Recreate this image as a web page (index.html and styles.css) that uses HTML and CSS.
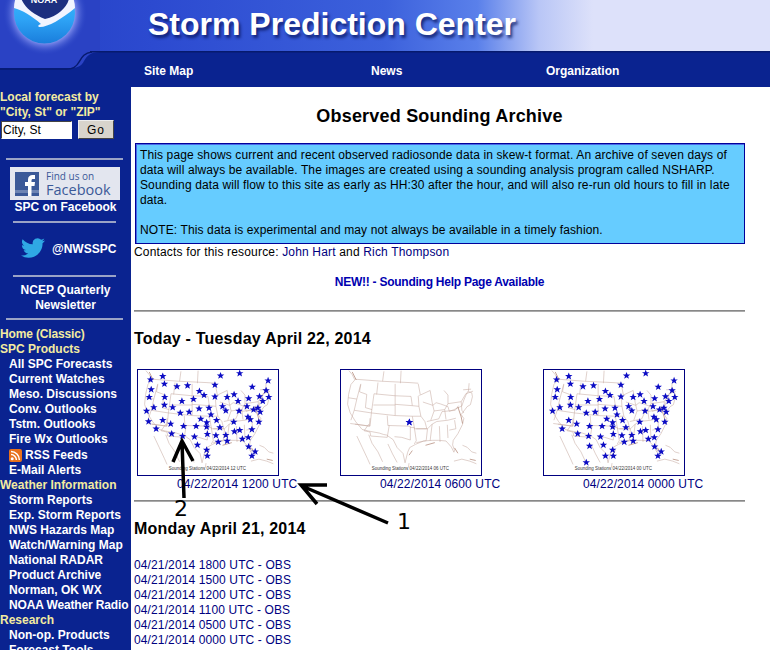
FILE: index.html
```html
<!DOCTYPE html>
<html lang="en">
<head>
<meta charset="utf-8">
<title>Observed Sounding Archive</title>
<link rel="stylesheet" href="styles.css">
</head>
<body>
<svg class="defs" width="0" height="0" aria-hidden="true">
  <defs>
    <marker id="star" markerUnits="userSpaceOnUse" viewBox="0 0 24 24" markerWidth="30" markerHeight="30" refX="12" refY="12" overflow="visible">
      <path d="M12 3l2.500 6.200h6.500l-5.200 4.100 2 6.500-5.800-3.900-5.800 3.900 2-6.500-5.200-4.100h6.500z" fill="#0c0cc4"/>
    </marker>
    <linearGradient id="sky" x1="0" x2="1" y1="0" y2="0">
      <stop offset="0" stop-color="#2440c4"/>
      <stop offset=".2" stop-color="#2c4ad0"/>
      <stop offset=".5" stop-color="#3c61dc"/>
      <stop offset=".62" stop-color="#5a80ea"/>
      <stop offset=".7" stop-color="#b9c6f6"/>
      <stop offset=".77" stop-color="#dde1fa"/>
      <stop offset="1" stop-color="#dde1fa"/>
    </linearGradient>
    <radialGradient id="glow" cx=".5" cy=".5" r=".5">
      <stop offset=".6" stop-color="#dfe4ff"/>
      <stop offset=".75" stop-color="#7c8cec" stop-opacity=".8"/>
      <stop offset="1" stop-color="#2c49c8" stop-opacity="0"/>
    </radialGradient>
    <linearGradient id="sea" x1="0" x2="0" y1="0" y2="1">
      <stop offset="0" stop-color="#3cc0ff"/>
      <stop offset=".6" stop-color="#2ea4f6"/>
      <stop offset="1" stop-color="#1a7edc"/>
    </linearGradient>
    <symbol id="usmap" viewBox="8 8 424 318">
      <g fill="none" stroke="#c4a89e" stroke-width="1.600">
        <path d="M32 10l10 12 8 16-12 14-7 30-3 30 8 26 16 26 20 24 20 5 32 6 12 4 10 2 20 14 12 24 18 18 6 28 8-32 6-14 18-10 24-10 26-2 20 0 22 2 16 18 8 16 2-6-6-16 2-14 14-20 14-28 4-18-8-12 18-24 10-6 6-24-2-12-12-4-6 12-6 14-6 18-26 12-12 4-4-14-22-8-14-4-10 8-30-10"/>
        <path d="M52 36l78 6 84 4 28 2"/>
        <path d="M30 92l26 4 -8 34 -10 30M56 96l12-46M68 52l-4 22 22 8-4 40M48 130l52 8-4 40-60-8M100 138l8-58M82 122l20 6M108 80l64 6 0 28-66 0M172 50v36l48 2 4 28-52-4M172 114l0 32-72-8M172 146l52 2 6 34-12 0-4-4-64-2-2-30M224 116l20 2 6 30-26 0M120 46l-4 36M138 12l-4 30M190 10l-2 38M242 50l6 32-6 6 2 30M250 148l12 16 6 22-38 0 0-4M218 178l0 42-26-8-22-2M154 176l-6 36-24-2-26-2-2-12-18-4 14-20M96 154l-2 24-44-6M230 182l6 40-6 10M236 186l34 0 14-14 14-8 34-4 24-6M270 186l-4 36-30 6M284 172l-6 50M306 178l2 48M330 174l2 40M352 160l4 26-20 4M268 164l36-8 10-22 40-4 10-14M248 84l30-14 6 36 6 26-10 28M290 132l32-4 10-18 0-26-12-14M322 128l4 30M332 110l40-6 14-24 22-8M372 104l2 26 6 8M378 68l24-2M396 48l-2 24"/>
        <path d="M56 208l16 34 16 34 8 18M92 204l10 26 18 26 14 30M150 232l14 30 14 26M214 290l-2 14"/>
        <path d="M376 236l14 6 14 14 14 4M350 284l24-6 24 6 20 8"/>
      </g>
      <g fill="none" stroke="#8a4a32" stroke-width="2.500" opacity=".6">
        <path d="M42 14l12 24M362 120l10 30 4 20M224 252l-10 14M264 236l28-8M352 244l10 16M398 278l18 4"/>
      </g>
    </symbol>
  </defs>
</svg>

<header class="masthead">
  <svg class="art" viewBox="0 0 770 87" preserveAspectRatio="none">
    <rect width="770" height="52" fill="url(#sky)"/>
    <path d="M0 0h100v52c-10 0-13 4-16 9-2 4-5 7-13 7H0z" fill="#2a42c4"/>
    <path d="M92 52C84 53 82 57 79 62c-2 4-5 7-12 7H0" fill="none" stroke="#061a6e" stroke-width="1.500"/>
    <rect x="90" y="51" width="680" height="1.500" fill="#061a6e"/>
    <circle cx="45" cy="13" r="42" fill="url(#glow)"/>
    <circle cx="44.500" cy="13" r="30.500" fill="url(#sea)"/>
    <path d="M14 8C22 10 32 16 41 24c-4 1-3 3-1 3 8 0 22-8 35-19 0-6-2-12-6-18H20c-4 5-6 12-6 18z" fill="#f1f4ff"/>
    <path d="M21 -2h48c-1 8-10 18-24 21C34 15 24 7 21-2z" fill="#1c2f80"/>
    <text class="noaa" x="44" y="3" text-anchor="middle">NOAA</text>
  </svg>
  <div class="brand">Storm Prediction Center</div>
  <nav class="topnav">
    <a class="nav-a">Site Map</a>
    <a class="nav-b">News</a>
    <a>Organization</a>
  </nav>
</header>

<div class="page">
  <aside class="side">
    <div class="local">Local forecast by<br>"City, St" or "ZIP"</div>
    <form class="zip">
      <input class="zip-input" type="text" value="City, St">
      <button class="zip-go" type="button">Go</button>
    </form>
    <hr class="rule wide first">
    <div class="fb">
      <svg class="fb-icon" viewBox="0 0 24 24" aria-hidden="true">
        <rect width="24" height="24" fill="#3b5998"/>
        <rect y="18" width="24" height="3" fill="#6d84b4"/>
        <path d="M13 24V14h-3v-4h3V7.500C13 4.500 15 3 17.500 3H20v4h-2c-1 0-1.500.5-1.500 1.500V10H20l-.5 4h-3v10z" fill="#fff"/>
      </svg>
      <div class="fb-text"><span class="fb-small">Find us on</span><span class="fb-big">Facebook</span></div>
    </div>
    <div class="center-link fb-label">SPC on Facebook</div>
    <hr class="rule narrow r2">
    <div class="tw">
      <svg class="tw-icon" viewBox="0 0 24 24" aria-hidden="true"><path fill="#2fa8e4" d="M23.953 4.570a10 10 0 01-2.825.775 4.958 4.958 0 002.163-2.723c-.951.555-2.005.959-3.127 1.184a4.920 4.920 0 00-8.384 4.482C7.690 8.095 4.067 6.130 1.640 3.162a4.822 4.822 0 00-.666 2.475c0 1.710.870 3.213 2.188 4.096a4.904 4.904 0 01-2.228-.616v.060a4.923 4.923 0 003.946 4.827 4.996 4.996 0 01-2.212.085 4.936 4.936 0 004.604 3.417 9.867 9.867 0 01-6.102 2.105c-.390 0-.779-.023-1.170-.067a13.995 13.995 0 007.557 2.209c9.053 0 13.998-7.496 13.998-13.985 0-.210 0-.420-.015-.630A9.935 9.935 0 0024 4.590z"/></svg>
      <span>@NWSSPC</span>
    </div>
    <hr class="rule narrow r3">
    <div class="center-link news">NCEP Quarterly<br>Newsletter</div>
    <hr class="rule wide r4">
    <ul class="menu">
      <li class="sec tight">Home (Classic)</li>
      <li class="sec">SPC Products</li>
      <li>All SPC Forecasts</li>
      <li>Current Watches</li>
      <li>Meso. Discussions</li>
      <li>Conv. Outlooks</li>
      <li>Tstm. Outlooks</li>
      <li>Fire Wx Outlooks</li>
      <li class="rss"><svg class="rss-icon" viewBox="0 0 13 13" aria-hidden="true"><rect width="13" height="13" rx="2" fill="#e8711c"/><circle cx="3.200" cy="9.800" r="1.500" fill="#fff"/><path d="M2 5.600a5.400 5.400 0 015.400 5.400M2 2.600A8.400 8.400 0 0110.400 11" fill="none" stroke="#fff" stroke-width="1.500"/></svg>RSS Feeds</li>
      <li>E-Mail Alerts</li>
      <li class="sec">Weather Information</li>
      <li>Storm Reports</li>
      <li>Exp. Storm Reports</li>
      <li>NWS Hazards Map</li>
      <li>Watch/Warning Map</li>
      <li>National RADAR</li>
      <li>Product Archive</li>
      <li>Norman, OK WX</li>
      <li class="tight">NOAA Weather Radio</li>
      <li class="sec">Research</li>
      <li>Non-op. Products</li>
      <li>Forecast Tools</li>
    </ul>
  </aside>

  <main class="main">
    <h1 class="title">Observed Sounding Archive</h1>
    <div class="notice">
      This page shows current and recent observed radiosonde data in skew-t format. An archive of seven days of data will always be available. The images are created using a sounding analysis program called NSHARP. Sounding data will flow to this site as early as HH:30 after the hour, and will also re-run old hours to fill in late data.<br><br>NOTE: This data is experimental and may not always be available in a timely fashion.
    </div>
    <p class="contacts">Contacts for this resource: <a>John Hart</a> and <a>Rich Thompson</a></p>
    <p class="help"><a>NEW!! - Sounding Help Page Available</a></p>
    <hr class="divider">
    <h2 class="day">Today - Tuesday April 22, 2014</h2>
    <div class="maps">
      <figure class="map-cell">
        <div class="thumb">
          <svg class="thumb-svg" viewBox="8 8 424 318" aria-hidden="true">
            <use href="#usmap" x="8" y="8" width="424" height="318"/>
            <path class="stars" transform="translate(-14 -20)" d="M60 57L97 47L272 45L330 38L102 70L140 78L172 75L255 73L368 79L416 60L62 87L208 92L222 104L410 90L56 110L103 110L190 116L255 109L292 110L313 102L357 114L390 108L418 110L325 122L400 122L155 122L102 134L70 141L127 141L48 152L207 145L237 143L278 138L288 151L352 138L372 148L385 143L328 152L392 155L150 158L177 155L243 163L54 184L97 180L121 191L212 176L230 187L260 180L312 185L355 170L362 178L388 185L160 198L198 198L230 200L270 202L367 208L77 206L124 221L157 228L193 230L232 222L258 226L288 225L314 214L330 210L356 232L338 237L265 246L292 243L202 255L230 270L357 260L377 275L367 288L232 288"/>
            <text class="cap" x="218" y="310" text-anchor="middle">Sounding Stations 04/22/2014 12 UTC</text>
          </svg>
        </div>
        <figcaption><a>04/22/2014 1200 UTC</a></figcaption>
      </figure>
      <figure class="map-cell">
        <div class="thumb">
          <svg class="thumb-svg" viewBox="8 8 424 318" aria-hidden="true">
            <use href="#usmap" x="8" y="8" width="424" height="318"/>
            <path class="stars" d="M215 166L215 166"/>
            <text class="cap" x="218" y="310" text-anchor="middle">Sounding Stations 04/22/2014 06 UTC</text>
          </svg>
        </div>
        <figcaption><a>04/22/2014 0600 UTC</a></figcaption>
      </figure>
      <figure class="map-cell">
        <div class="thumb">
          <svg class="thumb-svg" viewBox="8 8 424 318" aria-hidden="true">
            <use href="#usmap" x="8" y="8" width="424" height="318"/>
            <path class="stars" transform="translate(-14 -20)" d="M60 57L97 47L272 45L330 38L102 70L140 78L172 75L255 73L368 79L416 60L62 87L208 92L222 104L410 90L56 110L103 110L190 116L255 109L292 110L313 102L357 114L390 108L418 110L325 122L400 122L155 122L102 134L70 141L127 141L48 152L207 145L237 143L278 138L288 151L352 138L372 148L385 143L328 152L392 155L150 158L177 155L243 163L97 180L121 191L212 176L230 187L260 180L312 185L355 170L362 178L388 185L160 198L198 198L230 200L270 202L367 208L77 206L124 221L157 228L193 230L232 222L258 226L288 225L314 214L330 210L356 232L338 237L265 246L292 243L160 258L202 255L230 270L357 260L377 275L367 288L208 288L232 288L150 308"/>
            <text class="cap" x="218" y="310" text-anchor="middle">Sounding Stations 04/22/2014 00 UTC</text>
          </svg>
        </div>
        <figcaption><a>04/22/2014 0000 UTC</a></figcaption>
      </figure>
    </div>
    <hr class="divider d2">
    <h2 class="day d3">Monday April 21, 2014</h2>
    <ul class="obs">
      <li><a>04/21/2014 1800 UTC - OBS</a></li>
      <li><a>04/21/2014 1500 UTC - OBS</a></li>
      <li><a>04/21/2014 1200 UTC - OBS</a></li>
      <li><a>04/21/2014 1100 UTC - OBS</a></li>
      <li><a>04/21/2014 0500 UTC - OBS</a></li>
      <li><a>04/21/2014 0000 UTC - OBS</a></li>
    </ul>
  </main>
</div>

<svg class="notes" viewBox="0 0 770 650" aria-hidden="true">
  <g fill="none" stroke="#000" stroke-width="3.500">
    <path d="M388 523L302 486M327 485H301L317 504"/>
    <path d="M184 498L182 442M173 462L182 441L193 461"/>
  </g>
  <text x="397" y="529">1</text>
  <text x="174" y="516">2</text>
</svg>
</body>
</html>
```

FILE: styles.css
```css
* { box-sizing: border-box; }
html, body { margin: 0; height: 650px; overflow: hidden; }
body {
  position: relative;
  background: #0a2390;
  font: 12px/15px "Liberation Sans", Arial, sans-serif;
  color: #000;
}
.defs { position: absolute; }

/* masthead */
.masthead { position: relative; height: 87px; background: #0a2390; overflow: hidden; }
.art { position: absolute; inset: 0; width: 770px; height: 87px; }
.noaa { font: bold 9px "Liberation Sans", Arial, sans-serif; fill: #fff; }
.brand {
  position: relative;
  height: 52px;
  padding: 6px 0 0 148px;
  font-size: 32px;
  line-height: 36px;
  font-weight: bold;
  color: #fff;
  text-shadow: 2px 3px 3px rgba(8, 20, 90, .75);
}
.topnav {
  position: relative;
  display: flex;
  padding: 12px 0 0 144px;
  font-weight: bold;
  color: #fff;
}
.nav-a { width: 227px; }
.nav-b { width: 175px; }

/* page */
.page { display: flex; align-items: stretch; height: 563px; }
.side { width: 131px; flex: none; font-weight: bold; color: #fff; padding-top: 3px; }
.local { color: #f3eba0; }
.zip { display: flex; align-items: flex-start; padding-left: 1px; }
.zip-input {
  width: 71px;
  height: 18px;
  margin: 1px 0 0;
  padding: 0 1px;
  border: 1px solid #fff;
  border-top-color: #444;
  border-left-color: #444;
  background: #fff;
  font: 12px "Liberation Sans", Arial, sans-serif;
  color: #000;
}
.zip-go {
  width: 36px;
  height: 19px;
  margin: 0 0 0 6px;
  padding: 0;
  border: 1px solid;
  border-color: #eee #444 #444 #eee;
  background: #d8d4cc;
  font: 12px "Liberation Sans", Arial, sans-serif;
  color: #000;
  letter-spacing: 1px;
}
.rule { height: 2px; border: 0; background: #9aa3c6; }
.rule.wide { margin-left: 6px; width: 117px; }
.rule.narrow { margin-left: 13px; width: 103px; }
.first { margin-top: 19px; margin-bottom: 7px; }
.fb {
  display: flex;
  gap: 7px;
  align-items: center;
  width: 110px;
  height: 33px;
  margin-left: 10px;
  padding: 4px 0 3px 5px;
  background: #e3e6ef;
}
.fb-icon { width: 24px; height: 24px; flex: none; }
.fb-text { display: flex; flex-direction: column; font-family: "Open Sans", sans-serif; font-weight: 400; color: #3b5998; }
.fb-small { font-size: 10px; line-height: 11px; }
.fb-big { font-size: 14.500px; line-height: 16px; }
.center-link { text-align: center; }
.r2 { margin-top: 6px; margin-bottom: 0; }
.tw { display: flex; align-items: center; height: 52px; padding: 0 0 0 21px; gap: 7px; }
.tw span { margin-top: 1px; }
.tw-icon { width: 24px; height: 24px; flex: none; margin-top: -3px; }
.r3 { margin-top: 0; margin-bottom: 6px; }
.r4 { margin-top: 5px; margin-bottom: 7px; }
.menu { list-style: none; margin: 0; padding: 0; }
.menu li { padding-left: 9px; height: 15px; white-space: nowrap; }
.menu .sec { padding-left: 0; color: #f3eba0; }
.menu .rss { display: flex; align-items: center; gap: 3px; height: 16px; }
.menu .tight { letter-spacing: -.15px; }
.rss-icon { width: 13px; height: 13px; flex: none; }

/* main */
.main { flex: 1; background: #fff; padding: 0 25px 0 3px; min-width: 0; letter-spacing: .12px; }
.main a { color: #000080; }
.title { margin: 18px 0 16px; font-size: 18px; line-height: 22px; text-align: center; font-weight: bold; letter-spacing: .2px; }
.notice {
  margin-left: 1px;
  padding: 4px;
  height: 101px;
  border: 1px solid #000099;
  box-shadow: inset 1px 1px 0 #4a6ae8;
  background: #66ccff;
}
.contacts { margin: 1px 0 0; letter-spacing: .17px; }
.help { margin: 15px 0 0; text-align: center; font-weight: bold; letter-spacing: -.25px; }
.main .help a { color: #0000b0; }
.divider { height: 2px; margin: 20px 0 0; border: 0; background: linear-gradient(#777, #bbb); }
.day { margin: 17px 0 0; font-size: 16px; line-height: 20px; font-weight: bold; letter-spacing: .2px; }
.maps { display: grid; grid-template-columns: repeat(3, 203px); margin-top: 20px; padding-left: 3px; }
.map-cell { margin: 0; }
.thumb { width: 142px; height: 107px; border: 1px solid #000080; background: #fff; }
.thumb-svg { display: block; width: 140px; height: 105px; }
.stars { fill: none; stroke: none; marker-start: url(#star); marker-mid: url(#star); marker-end: url(#star); }
.cap { font: 13.500px "Liberation Sans", Arial, sans-serif; fill: #333; }
figcaption { padding-left: 40px; margin-top: 1px; white-space: nowrap; }
.d2 { margin-top: 8px; }
.d3 { margin-top: 17px; }
.obs { list-style: none; margin: 19px 0 0; padding: 0; }

/* hand-drawn annotations over the screenshot */
.notes { position: absolute; inset: 0; width: 770px; height: 650px; pointer-events: none; }
.notes text { font: 22px "DejaVu Sans", sans-serif; fill: #000; }
```
